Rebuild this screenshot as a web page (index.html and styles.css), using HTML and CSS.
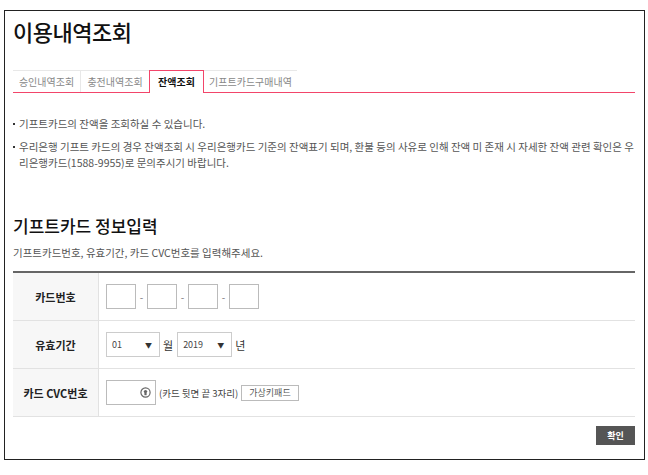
FILE: index.html
```html
<!DOCTYPE html>
<html>
<head>
	<meta charset="utf-8">
	<title>이용내역조회</title>
	<link rel="stylesheet" href="styles.css">
</head>
<body>
	<div class="frame">
		<h1 class="page-title">이용내역조회</h1>

		<ul class="tabs">
			<li class="tab">승인내역조회</li>
			<li class="tab">충전내역조회</li>
			<li class="tab active">잔액조회</li>
			<li class="tab">기프트카드구매내역</li>
		</ul>

		<ul class="notice">
			<li>기프트카드의 잔액을 조회하실 수 있습니다.</li>
			<li>우리은행 기프트 카드의 경우 잔액조회 시 우리은행카드 기준의 잔액표기 되며, 환불 등의 사유로 인해 잔액 미 존재 시 자세한 잔액 관련 확인은 우리은행카드(1588-9955)로 문의주시기 바랍니다.</li>
		</ul>

		<h2 class="section-title">기프트카드 정보입력</h2>
		<p class="section-desc">기프트카드번호, 유효기간, 카드 CVC번호를 입력해주세요.</p>

		<div class="form-table">
			<div class="row">
				<div class="label">카드번호</div>
				<div class="field">
					<span class="box"></span><span class="dash">-</span>
					<span class="box"></span><span class="dash">-</span>
					<span class="box"></span><span class="dash">-</span>
					<span class="box"></span>
				</div>
			</div>
			<div class="row">
				<div class="label">유효기간</div>
				<div class="field">
					<span class="select month">01<i class="arrow">▼</i></span>
					<span class="unit">월</span>
					<span class="select year">2019<i class="arrow">▼</i></span>
					<span class="unit">년</span>
				</div>
			</div>
			<div class="row">
				<div class="label">카드 CVC번호</div>
				<div class="field">
					<span class="cvc">
						<svg width="11" height="11" viewBox="0 0 11 11">
							<circle cx="5.5" cy="5.5" r="4.6" fill="none" stroke="#666" stroke-width="1.2"/>
							<circle cx="5.5" cy="4.6" r="1.7" fill="#666"/>
							<rect x="4.4" y="6" width="2.2" height="2.2" fill="#666"/>
						</svg>
					</span>
					<span class="hint">(카드 뒷면 끝 3자리)</span>
					<span class="keypad">가상키패드</span>
				</div>
			</div>
		</div>

		<div class="actions">
			<span class="btn-ok">확인</span>
		</div>
	</div>
</body>
</html>
```

FILE: styles.css
```css
body {
	margin: 0;
	font-family: "Noto Sans CJK KR", "Noto Sans", sans-serif;
	color: #333;
	background: #fff;
}
.frame {
	margin: 10px 0 0 4px;
	width: 622px;
	height: 448px;
	padding: 0 9px 0 8px;
	border: 1px solid #222;
}
.page-title {
	margin: 0;
	padding-top: 4px;
	height: 55px;
	font-size: 22px;
	font-weight: 500;
	line-height: 32px;
	color: #111;
	letter-spacing: -0.5px;
}
.tabs {
	list-style: none;
	margin: 0;
	padding: 0;
	display: flex;
	border-bottom: 1px solid #f2456a;
}
.tab {
	box-sizing: border-box;
	height: 22px;
	line-height: 21px;
	font-size: 10px;
	color: #888;
	text-align: center;
	white-space: nowrap;
	border-top: 1px solid #e8e8e8;
	border-right: 1px solid #e8e8e8;
}
.tab:nth-child(1) { width: 68px; }
.tab:nth-child(2) { width: 69px; }
.tab:nth-child(4) { width: 93px; border-right: none; }
.tab.active {
	height: 23px;
	width: 55px;
	margin: 0 0 -1px -1px;
	color: #111;
	font-weight: bold;
	background: #fff;
	border: 1px solid #f2456a;
	border-bottom: none;
}
.notice {
	list-style: none;
	margin: 0;
	padding: 23px 0 0;
	font-size: 10.5px;
	color: #555;
	line-height: 16px;
}
.notice li {
	position: relative;
	padding-left: 6px;
	margin-bottom: 7px;
}
.notice li::before {
	content: "";
	position: absolute;
	left: 0;
	top: 7px;
	width: 2px;
	height: 2px;
	background: #333;
}
.section-title {
	margin: 43px 0 0;
	font-size: 17px;
	font-weight: 500;
	line-height: 24px;
	color: #111;
}
.section-desc {
	margin: 7px 0 0;
	font-size: 10.5px;
	color: #555;
	line-height: 16px;
}
.form-table {
	margin-top: 10px;
	border-top: 2px solid #666;
}
.row {
	display: flex;
	height: 47px;
	border-bottom: 1px solid #e2e2e2;
}
.label {
	width: 85px;
	background: #f7f7f7;
	border-right: 1px solid #e2e2e2;
	display: flex;
	align-items: center;
	justify-content: center;
	font-size: 11px;
	font-weight: bold;
	color: #222;
}
.field {
	display: flex;
	align-items: center;
	padding-left: 7px;
	font-size: 10px;
	color: #555;
}
.box {
	width: 28px;
	height: 23px;
	border: 1px solid #bbb;
}
.dash {
	width: 11px;
	text-align: center;
	color: #777;
}
.select {
	display: flex;
	align-items: center;
	justify-content: space-between;
	height: 23px;
	border: 1px solid #ccc;
	padding: 0 7px 0 5px;
	font-size: 9px;
	color: #444;
}
.month { width: 40px; }
.year { width: 41px; }
.arrow {
	font-style: normal;
	font-size: 7px;
	color: #333;
}
.unit {
	padding: 0 4px 0 3px;
	font-size: 11px;
	color: #333;
}
.cvc {
	display: flex;
	align-items: center;
	justify-content: flex-end;
	width: 44px;
	height: 23px;
	border: 1px solid #bbb;
	padding-right: 4px;
}
.hint {
	padding: 0 3px 0 3px;
	font-size: 9.5px;
	color: #444;
}
.keypad {
	height: 14px;
	line-height: 14px;
	padding: 0 7px;
	border: 1px solid #bbb;
	font-size: 9px;
	color: #555;
}
.actions {
	display: flex;
	justify-content: flex-end;
	padding-top: 9px;
}
.btn-ok {
	width: 39px;
	height: 19px;
	line-height: 19px;
	text-align: center;
	background: #555;
	color: #fff;
	font-size: 9px;
	font-weight: bold;
}
```
